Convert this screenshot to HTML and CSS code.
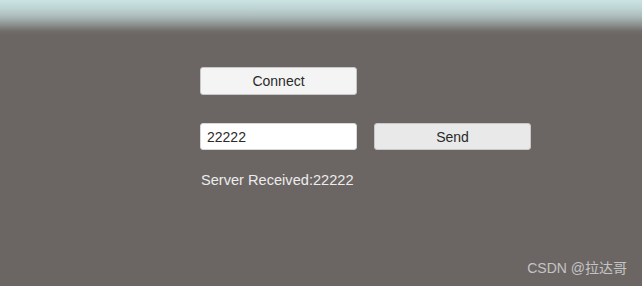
FILE: index.html
```html
<!DOCTYPE html>
<html lang="en">
<head>
    <meta charset="UTF-8">
    <title>Socket Client</title>
    <link rel="stylesheet" href="styles.css">
</head>
<body>
    <div class="panel">
        <button class="btn connect">Connect</button>
        <div class="row">
            <input class="field" type="text" value="22222">
            <button class="btn send">Send</button>
        </div>
        <div class="received">Server Received:22222</div>
    </div>
    <div class="mark">CSDN @拉达哥</div>
</body>
</html>
```

FILE: styles.css
```css
html, body {
    height: 100%;
}

body {
    margin: 0;
    font-family: 'Liberation Sans', Arial, 'Noto Sans CJK SC', sans-serif;
    background: linear-gradient(to bottom, #cbe3e3 0, #bfd5d5 8px, #a9b9b8 17px, #8a908e 25px, #716d6a 31px, #6b6663 35px, #6b6663 100%);
    overflow: hidden;
    position: relative;
}

.panel {
    display: flex;
    flex-direction: column;
    align-items: flex-start;
    padding: 67px 0 0 200px;
}

.btn {
    width: 157px;
    height: 28px;
    border: 1px solid #c8c8c8;
    border-radius: 3px;
    font-family: inherit;
    font-size: 14px;
    color: #2a2a2a;
    padding: 0;
}

.connect {
    background: #f4f4f4;
}

.row {
    display: flex;
    gap: 17px;
    margin-top: 28px;
}

.field {
    box-sizing: border-box;
    width: 157px;
    height: 27px;
    border: 1px solid #d8d8d8;
    border-radius: 3px;
    background: #fff;
    padding: 0 6px;
    font-family: inherit;
    font-size: 14px;
    color: #2a2a2a;
}

.send {
    background: #e9e9e9;
    height: 27px;
}

.received {
    margin-top: 22px;
    margin-left: 1px;
    font-size: 14.6px;
    color: #ececec;
}

.mark {
    position: absolute;
    right: 15px;
    bottom: 9px;
    font-size: 14px;
    color: #c4c4c4;
    font-family: 'Liberation Sans', 'Noto Sans CJK SC', sans-serif;
}
```
